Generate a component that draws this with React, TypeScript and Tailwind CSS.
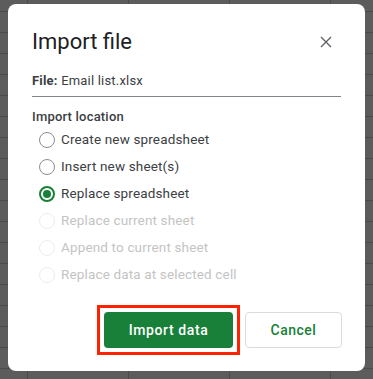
import React from 'react'

const options = [
  { label: 'Create new spreadsheet', checked: false, disabled: false },
  { label: 'Insert new sheet(s)', checked: false, disabled: false },
  { label: 'Replace spreadsheet', checked: true, disabled: false },
  { label: 'Replace current sheet', checked: false, disabled: true },
  { label: 'Append to current sheet', checked: false, disabled: true },
  { label: 'Replace data at selected cell', checked: false, disabled: true },
]

function Radio({ checked, disabled }: { checked: boolean; disabled: boolean }) {
  if (checked) {
    return (
      <span className="w-4 h-4 rounded-full border-2 border-[#188038] flex items-center justify-center shrink-0">
        <span className="w-2 h-2 rounded-full bg-[#188038]" />
      </span>
    )
  }
  return (
    <span
      className={
        disabled
          ? 'w-4 h-4 rounded-full border-[1.5px] border-[#ececec] shrink-0'
          : 'w-4 h-4 rounded-full border-[1.5px] border-[#8a8d91] shrink-0'
      }
    />
  )
}

export default function App() {
  return (
    <div
      className="w-[373px] h-[379px] pt-1 pl-2 bg-[#5c5c5c] bg-[linear-gradient(to_right,#4b4b4b_1px,transparent_1px),linear-gradient(to_bottom,#4b4b4b_1px,transparent_1px)] bg-[size:101px_21px] bg-[position:27px_11px]"
      style={{ fontFamily: 'Roboto, "Liberation Sans", sans-serif' }}
    >
      <div className="w-[357px] bg-white rounded-lg px-6 pt-6 pb-4 flex flex-col">
        {/* header */}
        <div className="flex items-center justify-between h-[28px]">
          <h1 className="text-[22px] leading-[28px] text-[#202124]">Import file</h1>
          <svg width="12" height="12" viewBox="0 0 12 12" className="mr-[9px]">
            <path d="M1 1L11 11M11 1L1 11" stroke="#5f6368" strokeWidth="1.4" />
          </svg>
        </div>

        <div className="mt-[15px] pb-[5px] border-b border-[#80868b] text-[13px] tracking-[0.2px] leading-5 text-[#3c4043]">
          <span className="font-bold">File:</span> Email list.xlsx
        </div>

        <div className="mt-[11px] text-[13px] tracking-[0.2px] leading-[18px] font-medium text-[#3c4043]">
          Import location
        </div>

        <div className="flex flex-col">
          {options.map((o) => (
            <div key={o.label} className="h-[27px] flex items-center gap-[6px] ml-[7px]">
              <Radio checked={o.checked} disabled={o.disabled} />
              <span
                className={
                  o.disabled
                    ? 'text-[13.5px] tracking-[0.15px] text-[#c4c4c4]'
                    : 'text-[13.5px] tracking-[0.15px] text-[#3c4043]'
                }
              >
                {o.label}
              </span>
            </div>
          ))}
        </div>

        <div className="mt-[17px] flex items-center justify-end">
          <div className="border-[3px] border-[#ff2200] p-1">
            <button className="w-[129px] h-9 rounded bg-[#188038] text-white text-[14px] tracking-[0.6px] font-medium">
              Import data
            </button>
          </div>
          <button className="ml-[5px] mr-[-1px] w-[97px] h-9 rounded border border-[#dadce0] text-[#188038] text-[14px] tracking-[0.5px] font-medium">
            Cancel
          </button>
        </div>
      </div>
    </div>
  )
}
